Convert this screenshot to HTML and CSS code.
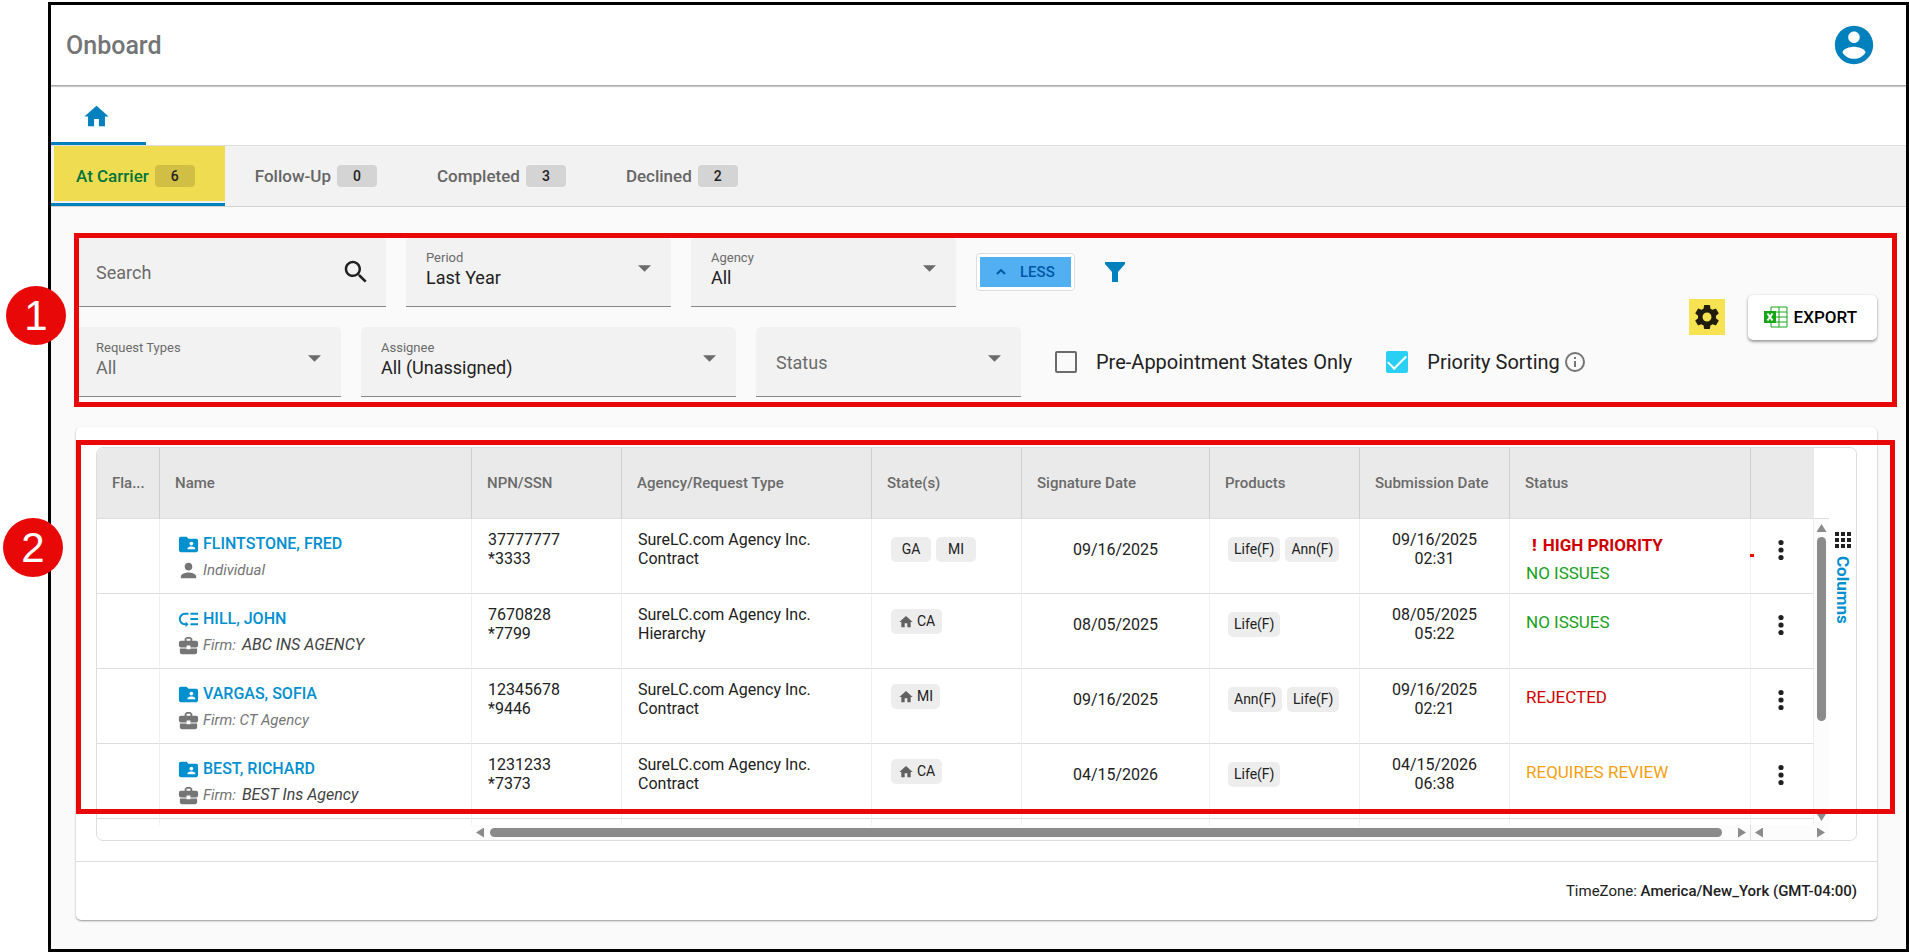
FILE: index.html
```html
<!DOCTYPE html>
<html lang="en">

<head>
    <meta charset="UTF-8" />
    <meta name="viewport" content="width=device-width, initial-scale=1.0" />
    <title>Onboard</title>
    <link rel="stylesheet" href="styles.css">
</head>

<body>
    <!-- Shared icons -->
    <svg class="sprite" aria-hidden="true">
        <symbol id="home" viewBox="0 0 24 24"><path d="M10 20v-6h4v6h5v-8h3L12 3 2 12h3v8z" /></symbol>
        <symbol id="folder" viewBox="0 0 24 24"><path d="M20 6h-8l-2-2H4c-1.100 0-1.990.9-1.990 2L2 18c0 1.100.9 2 2 2h16c1.100 0 2-.9 2-2V8c0-1.100-.9-2-2-2zm-5 3c1.100 0 2 .9 2 2s-.9 2-2 2-2-.9-2-2 .9-2 2-2zm4 8h-8v-1c0-1.330 2.670-2 4-2s4 .67 4 2v1z" /></symbol>
        <symbol id="person" viewBox="0 0 24 24"><path d="M12 12c2.210 0 4-1.790 4-4s-1.790-4-4-4-4 1.790-4 4 1.790 4 4 4zm0 2c-2.670 0-8 1.340-8 4v2h16v-2c0-2.660-5.330-4-8-4z" /></symbol>
        <symbol id="case" viewBox="0 0 24 24"><path d="M10 16v-1H3.010L3 19c0 1.110.89 2 2 2h14c1.110 0 2-.89 2-2v-4h-7v1h-4zm10-9h-4.010V5l-2-2h-4l-2 2v2H4c-1.100 0-2 .9-2 2v3c0 1.110.89 2 2 2h6v-2h4v2h6c1.100 0 2-.9 2-2V9c0-1.100-.9-2-2-2zm-6 0h-4V5h4v2z" /></symbol>
        <symbol id="hierarchy" viewBox="0 0 24 24"><path d="M14 5h8v2h-8zm0 5.500h8v2h-8zm0 5.500h8v2h-8zM2 11.500C2 15.080 4.920 18 8.500 18H9v2l3-3-3-3v2h-.5C6.020 16 4 13.980 4 11.500S6.020 7 8.500 7H12V5H8.500C4.920 5 2 7.920 2 11.500z" /></symbol>
        <symbol id="caret" viewBox="0 0 14 7"><path d="M0 0h14L7 7z" /></symbol>
        <symbol id="more" viewBox="0 0 24 24"><circle cx="12" cy="4.500" r="2.600" /><circle cx="12" cy="12" r="2.600" /><circle cx="12" cy="19.500" r="2.600" /></symbol>
    </svg>

    <div class="frame">
        <header class="header">
            <h1>Onboard</h1>
            <button class="icon-button" aria-label="Account">
                <svg class="avatar" viewBox="0 0 24 24"><path d="M12 2C6.480 2 2 6.480 2 12s4.480 10 10 10 10-4.480 10-10S17.520 2 12 2zm0 3c1.660 0 3 1.340 3 3s-1.340 3-3 3-3-1.340-3-3 1.340-3 3-3zm0 14.200c-2.500 0-4.710-1.280-6-3.220.03-1.990 4-3.080 6-3.080 1.990 0 5.970 1.090 6 3.080-1.290 1.940-3.500 3.220-6 3.220z" /></svg>
            </button>
        </header>

        <nav class="main-nav">
            <a href="#" aria-label="Home"><svg class="home-icon"><use href="#home" /></svg></a>
        </nav>

        <nav class="tabs">
            <a class="tab active" href="#">At Carrier <span class="badge">6</span></a>
            <a class="tab" href="#">Follow-Up <span class="badge">0</span></a>
            <a class="tab" href="#">Completed <span class="badge">3</span></a>
            <a class="tab" href="#">Declined <span class="badge">2</span></a>
        </nav>

        <main class="content">
            <section class="filters">
                <div class="filter-rows">
                    <div class="filter-row">
                        <div class="field search">
                            <input type="text" placeholder="Search" aria-label="Search">
                            <svg class="search-icon" viewBox="0 0 24 24"><path d="M15.500 14h-.79l-.28-.27C15.410 12.590 16 11.110 16 9.500 16 5.910 13.090 3 9.500 3S3 5.910 3 9.500 5.910 16 9.500 16c1.610 0 3.090-.59 4.230-1.570l.27.28v.79l5 4.990L20.490 19l-4.990-5zm-6 0C7.010 14 5 11.990 5 9.500S7.010 5 9.500 5 14 7.010 14 9.500 11.990 14 9.500 14z" /></svg>
                        </div>
                        <div class="field">
                            <div class="field-text">
                                <label for="period">Period</label>
                                <select id="period"><option>Last Year</option></select>
                            </div>
                            <svg class="caret"><use href="#caret" /></svg>
                        </div>
                        <div class="field">
                            <div class="field-text">
                                <label for="agency">Agency</label>
                                <select id="agency"><option>All</option></select>
                            </div>
                            <svg class="caret"><use href="#caret" /></svg>
                        </div>
                        <button class="less"><span><svg viewBox="0 0 10 6"><path d="M1 5l4-4 4 4" /></svg>LESS</span></button>
                        <button class="icon-button funnel" aria-label="Filter">
                            <svg viewBox="0 0 20 20"><path d="M0 0h20v2l-7 8v10H7V10L0 2z" /></svg>
                        </button>
                    </div>
                    <div class="filter-row">
                        <div class="field">
                            <div class="field-text">
                                <label for="types">Request Types</label>
                                <select id="types" class="muted"><option>All</option></select>
                            </div>
                            <svg class="caret"><use href="#caret" /></svg>
                        </div>
                        <div class="field wide">
                            <div class="field-text">
                                <label for="assignee">Assignee</label>
                                <select id="assignee"><option>All (Unassigned)</option></select>
                            </div>
                            <svg class="caret"><use href="#caret" /></svg>
                        </div>
                        <div class="field">
                            <select class="muted" aria-label="Status"><option>Status</option></select>
                            <svg class="caret"><use href="#caret" /></svg>
                        </div>
                        <div class="checks">
                            <label class="check"><input type="checkbox">Pre-Appointment States Only</label>
                            <label class="check"><input type="checkbox" checked>Priority Sorting
                                <svg class="info" viewBox="0 0 20 20"><circle cx="10" cy="10" r="9" /><path d="M10 9v6M10 5v2" /></svg>
                            </label>
                        </div>
                    </div>
                </div>
                <div class="actions">
                    <button class="settings" aria-label="Settings">
                        <svg viewBox="0 0 24 24"><path d="M19.140 12.940c.04-.3.06-.61.06-.94 0-.32-.02-.64-.07-.94l2.030-1.580c.18-.14.23-.41.12-.61l-1.920-3.320c-.12-.22-.37-.29-.59-.22l-2.390.96c-.5-.38-1.030-.7-1.620-.94l-.36-2.540c-.04-.24-.24-.41-.48-.41h-3.840c-.24 0-.43.17-.47.41l-.36 2.540c-.59.24-1.130.57-1.620.94l-2.390-.96c-.22-.08-.47 0-.59.22L2.740 8.870c-.12.21-.08.47.12.61l2.030 1.580c-.05.3-.09.63-.09.94s.02.64.07.94l-2.030 1.580c-.18.14-.23.41-.12.61l1.920 3.320c.12.22.37.29.59.22l2.390-.96c.5.38 1.030.7 1.620.94l.36 2.540c.05.24.24.41.48.41h3.840c.24 0 .44-.17.47-.41l.36-2.540c.59-.24 1.130-.56 1.620-.94l2.390.96c.22.08.47 0 .59-.22l1.920-3.320c.12-.22.07-.47-.12-.61l-2.010-1.580zM12 15.600c-1.980 0-3.600-1.620-3.600-3.600s1.620-3.600 3.600-3.600 3.600 1.620 3.600 3.600-1.620 3.600-3.600 3.600z" /></svg>
                    </button>
                    <button class="export">
                        <svg viewBox="0 0 24 22">
                            <path class="sheet" d="M7 1h16v20H7zM7 6h16M7 11h16M7 16h16M15 1v20" />
                            <path class="tile" d="M0 5h12v12H0z" />
                            <path class="cross" d="M3.500 7.500l5 7M8.500 7.500l-5 7" />
                        </svg>
                        EXPORT
                    </button>
                </div>
                <div class="callout"></div>
                <span class="marker marker-one">1</span>
            </section>

            <section class="card">
                <div class="grid">
                    <div class="grid-main">
                        <div class="grid-body">
                            <table>
                                <colgroup>
                                    <col class="col-flag">
                                    <col class="col-name">
                                    <col class="col-base">
                                    <col class="col-agency">
                                    <col class="col-base">
                                    <col class="col-sign">
                                    <col class="col-base">
                                    <col class="col-base">
                                    <col>
                                    <col class="col-menu">
                                </colgroup>
                                <thead>
                                    <tr>
                                        <th>Fla...</th>
                                        <th>Name</th>
                                        <th>NPN/SSN</th>
                                        <th>Agency/Request Type</th>
                                        <th>State(s)</th>
                                        <th>Signature Date</th>
                                        <th>Products</th>
                                        <th>Submission Date</th>
                                        <th>Status</th>
                                        <th></th>
                                    </tr>
                                </thead>
                                <tbody>
                                    <tr>
                                        <td></td>
                                        <td class="name">
                                            <a href="#"><svg><use href="#folder" /></svg>FLINTSTONE, FRED</a>
                                            <p><svg><use href="#person" /></svg>Individual</p>
                                        </td>
                                        <td>37777777<br>*3333</td>
                                        <td>SureLC.com Agency Inc.<br>Contract</td>
                                        <td class="chips states"><div><span class="chip state">GA</span><span class="chip state">MI</span></div></td>
                                        <td class="signed">09/16/2025</td>
                                        <td class="chips"><div><span class="chip">Life(F)</span><span class="chip">Ann(F)</span></div></td>
                                        <td class="submitted">09/16/2025<br>02:31</td>
                                        <td class="status priority ok"><strong><b>!</b>HIGH PRIORITY</strong>NO ISSUES<i class="tick"></i></td>
                                        <td class="menu"><button class="icon-button" aria-label="Actions"><svg><use href="#more" /></svg></button></td>
                                    </tr>
                                    <tr>
                                        <td></td>
                                        <td class="name">
                                            <a href="#"><svg><use href="#hierarchy" /></svg>HILL, JOHN</a>
                                            <p><svg><use href="#case" /></svg>Firm: <em>ABC INS AGENCY</em></p>
                                        </td>
                                        <td>7670828<br>*7799</td>
                                        <td>SureLC.com Agency Inc.<br>Hierarchy</td>
                                        <td class="chips states resident"><div><span class="chip"><svg><use href="#home" /></svg>CA</span></div></td>
                                        <td class="signed">08/05/2025</td>
                                        <td class="chips"><div><span class="chip">Life(F)</span></div></td>
                                        <td class="submitted">08/05/2025<br>05:22</td>
                                        <td class="status ok">NO ISSUES</td>
                                        <td class="menu"><button class="icon-button" aria-label="Actions"><svg><use href="#more" /></svg></button></td>
                                    </tr>
                                    <tr>
                                        <td></td>
                                        <td class="name">
                                            <a href="#"><svg><use href="#folder" /></svg>VARGAS, SOFIA</a>
                                            <p><svg><use href="#case" /></svg>Firm: CT Agency</p>
                                        </td>
                                        <td>12345678<br>*9446</td>
                                        <td>SureLC.com Agency Inc.<br>Contract</td>
                                        <td class="chips states resident"><div><span class="chip"><svg><use href="#home" /></svg>MI</span></div></td>
                                        <td class="signed">09/16/2025</td>
                                        <td class="chips"><div><span class="chip">Ann(F)</span><span class="chip">Life(F)</span></div></td>
                                        <td class="submitted">09/16/2025<br>02:21</td>
                                        <td class="status rejected">REJECTED</td>
                                        <td class="menu"><button class="icon-button" aria-label="Actions"><svg><use href="#more" /></svg></button></td>
                                    </tr>
                                    <tr>
                                        <td></td>
                                        <td class="name">
                                            <a href="#"><svg><use href="#folder" /></svg>BEST, RICHARD</a>
                                            <p><svg><use href="#case" /></svg>Firm: <em>BEST Ins Agency</em></p>
                                        </td>
                                        <td>1231233<br>*7373</td>
                                        <td>SureLC.com Agency Inc.<br>Contract</td>
                                        <td class="chips states resident"><div><span class="chip"><svg><use href="#home" /></svg>CA</span></div></td>
                                        <td class="signed">04/15/2026</td>
                                        <td class="chips"><div><span class="chip">Life(F)</span></div></td>
                                        <td class="submitted">04/15/2026<br>06:38</td>
                                        <td class="status review">REQUIRES REVIEW</td>
                                        <td class="menu"><button class="icon-button" aria-label="Actions"><svg><use href="#more" /></svg></button></td>
                                    </tr>
                                    <tr class="next-row">
                                        <td></td><td></td><td></td><td></td><td></td><td></td><td></td><td></td><td></td><td></td>
                                    </tr>
                                </tbody>
                            </table>
                            <div class="v-scroll">
                                <div class="v-track">
                                    <i class="arrow up"></i>
                                    <i class="v-thumb"></i>
                                    <i class="arrow down"></i>
                                </div>
                            </div>
                        </div>
                        <div class="h-scroll">
                            <div class="h-track">
                                <i class="arrow left"></i>
                                <i class="h-thumb"></i>
                                <i class="arrow right"></i>
                            </div>
                            <div class="h-track pinned">
                                <i class="arrow left"></i>
                                <i class="arrow right"></i>
                            </div>
                        </div>
                    </div>
                    <button class="side-button">
                        <svg viewBox="0 0 16 16"><path d="M0 0h4v4H0zM6 0h4v4H6zM12 0h4v4h-4zM0 6h4v4H0zM6 6h4v4H6zM12 6h4v4h-4zM0 12h4v4H0zM6 12h4v4H6zM12 12h4v4h-4z" /></svg>
                        <span>Columns</span>
                    </button>
                </div>
                <footer class="card-footer">TimeZone: <b>America/New_York (GMT-04:00)</b></footer>
                <div class="callout"></div>
                <span class="marker marker-two">2</span>
            </section>
        </main>
    </div>
</body>

</html>
```
FILE: styles.css
```css
* {
    box-sizing: border-box;
}

body {
    margin: 0;
    padding: 2px 0 0 48px;
    background-color: #fff;
    font-family: Roboto, "Liberation Sans", sans-serif;
    font-size: 16px;
    color: #212121;
}

button,
input,
select {
    font-family: inherit;
    color: inherit;
}

a {
    text-decoration: none;
}

.sprite {
    display: none;
}

.icon-button {
    display: flex;
    padding: 0;
    border: none;
    background: none;
    cursor: pointer;
}

.frame {
    display: flex;
    flex-direction: column;
    min-height: calc(100vh - 2px);
    border: 3px solid #000;
}

/* Header */
.header {
    display: flex;
    justify-content: space-between;
    align-items: center;
    height: 81px;
    padding: 0 29px 0 15px;
    border-bottom: 1px solid #a9aaa9;
    box-shadow: 0 1px 1px rgba(0, 0, 0, 0.2);
}

h1 {
    margin: 0;
    font-size: 25px;
    font-weight: 500;
    color: #757575;
}

.avatar {
    width: 46px;
    height: 46px;
    fill: #0080bd;
}

.main-nav {
    display: flex;
    height: 60px;
    border-bottom: 1px solid #dedede;
}

.main-nav a {
    display: flex;
    justify-content: center;
    align-items: center;
    width: 95px;
    padding: 4px 5px 0 0;
    border-bottom: 3px solid #0080bd;
}

.home-icon {
    width: 29px;
    height: 29px;
    fill: #0080bd;
}

/* Tabs */
.tabs {
    display: flex;
    height: 61px;
    background-color: #f2f2f2;
    border-bottom: 1px solid #d4d4d4;
}

.tab {
    position: relative;
    z-index: 0;
    display: flex;
    align-items: center;
    gap: 6px;
    padding: 0 30px;
    font-size: 17px;
    font-weight: 500;
    color: #666;
}

.tab.active {
    padding-left: 25px;
    border-bottom: 3px solid #0080bd;
    padding-top: 3px;
    color: #00763d;
}

.tab.active::before {
    content: "";
    position: absolute;
    inset: 0 0 2px 3px;
    background-color: #efdc50;
    z-index: -1;
}

.badge {
    width: 40px;
    border-radius: 4px;
    background-color: #d4d4d4;
    font-size: 14px;
    line-height: 22px;
    text-align: center;
    color: #212121;
}

.active .badge {
    background-color: #d1bf45;
}

.content {
    flex: 1;
    padding: 30px 29px 29px 25px;
    background-color: #fafafa;
}

/* Filters */
.filters {
    position: relative;
    display: flex;
    justify-content: space-between;
    margin-bottom: 30px;
}

.filter-rows {
    display: flex;
    flex-direction: column;
    gap: 20px;
}

.filter-row {
    display: flex;
    gap: 20px;
}

.field {
    display: flex;
    align-items: center;
    width: 265px;
    height: 70px;
    padding: 1px 20px 0;
    background-color: #f2f2f2;
    border-bottom: 1px solid #888;
    border-radius: 5px 5px 0 0;
}

.search {
    width: 310px;
    padding-right: 15px;
}

.wide {
    width: 375px;
}

.field-text {
    flex: 1;
    padding-bottom: 7px;
}

.field label {
    display: block;
    font-size: 13px;
    line-height: 17px;
    color: #6b6b6b;
}

.field select,
.field input {
    width: 100%;
    padding: 0;
    border: none;
    outline: none;
    background: none;
    appearance: none;
    font-size: 18px;
    line-height: 23px;
}

.field input::placeholder {
    color: #6b6b6b;
}

.field .muted {
    color: #6b6b6b;
}

.search-icon {
    flex: none;
    width: 30px;
    height: 30px;
    fill: #212121;
}

.caret {
    flex: none;
    width: 13px;
    height: 7px;
    margin-bottom: 7px;
    fill: #6b6b6b;
}

.less {
    align-self: center;
    padding: 3px;
    border: 1px solid #ddd;
    border-radius: 4px;
    background-color: #fff;
    cursor: pointer;
}

.less span {
    display: flex;
    align-items: center;
    gap: 14px;
    padding: 0 16px;
    background-color: #52aff2;
    font-size: 15px;
    font-weight: 500;
    line-height: 30px;
    color: #0058a8;
}

.less svg {
    width: 10px;
    height: 6px;
    fill: none;
    stroke: #0058a8;
    stroke-width: 2;
}

.funnel {
    align-self: center;
    margin-left: 10px;
}

.funnel svg {
    width: 20px;
    height: 20px;
    fill: #0080bd;
}

.checks {
    display: flex;
    gap: 34px;
    padding-left: 14px;
}

.check {
    display: flex;
    align-items: center;
    font-size: 20px;
}

.check input {
    width: 22px;
    height: 22px;
    margin: 0 19px 0 0;
    border: 2px solid #6b6b6b;
    border-radius: 2px;
    appearance: none;
}

.check input:checked {
    display: grid;
    place-items: center;
    border: none;
    background-color: #29d0f3;
}

.check input:checked::before {
    content: "";
    width: 16px;
    height: 8px;
    border: solid #fff;
    border-width: 0 0 2px 2px;
    transform: translateY(-2px) rotate(-45deg);
}

.info {
    width: 20px;
    height: 20px;
    margin-left: 5px;
    fill: none;
    stroke: #757575;
    stroke-width: 2;
}

.actions {
    display: flex;
    align-items: center;
    gap: 23px;
}

.settings {
    display: flex;
    padding: 3px;
    border: none;
    background-color: #f7e251;
    cursor: pointer;
}

.settings svg {
    width: 30px;
    height: 30px;
    fill: #201d0b;
}

.export {
    display: flex;
    align-items: center;
    gap: 6px;
    height: 45px;
    padding: 0 20px 0 16px;
    border: none;
    border-radius: 5px;
    background-color: #fff;
    box-shadow: 0 2px 3px rgba(0, 0, 0, 0.35), 0 0 2px rgba(0, 0, 0, 0.15);
    font-size: 17px;
    font-weight: 500;
    color: #000;
    cursor: pointer;
}

.export svg {
    width: 24px;
    height: 22px;
}

.sheet {
    fill: #fff;
    stroke: #18a618;
    stroke-width: 1;
}

.tile {
    fill: #18a618;
}

.cross {
    stroke: #fff;
    stroke-width: 2;
}

/* Callouts and their numbers */
.callout {
    position: absolute;
    inset: -4px -20px -10px -2px;
    border: 5px solid #e90808;
    pointer-events: none;
}

.card .callout {
    inset: 13px -18px 106px 0;
}

.marker {
    position: absolute;
    display: flex;
    justify-content: center;
    align-items: center;
    width: 60px;
    height: 59px;
    border-radius: 50%;
    background-color: #e90808;
    font-family: "Liberation Sans", Arial, sans-serif;
    font-size: 42px;
    color: #fff;
}

.marker-one {
    left: -70px;
    top: 49px;
}

.marker-two {
    left: -73px;
    top: 91px;
}

/* Card with the grid */
.card {
    position: relative;
    padding-top: 20px;
    border-radius: 5px;
    background-color: #fff;
    box-shadow: 0 1px 2px rgba(0, 0, 0, 0.4);
}

.grid {
    display: flex;
    margin: 0 20px 20px;
    border: 1px solid #ddd;
    border-radius: 7px;
    overflow: hidden;
}

.grid-main {
    flex: 1;
}

.grid-body {
    display: flex;
}

table {
    flex: 1;
    width: 100%;
    table-layout: fixed;
    border-collapse: separate;
    border-spacing: 0;
}

.col-flag,
.col-menu {
    width: 63px;
}

.col-name {
    width: 312px;
}

.col-base {
    width: 150px;
}

.col-agency {
    width: 250px;
}

.col-sign {
    width: 188px;
}

th {
    height: 71px;
    padding: 0 0 0 15px;
    border-right: 1px solid #d0d0d0;
    border-bottom: 1px solid #ddd;
    background-color: #eaeaea;
    font-size: 15px;
    font-weight: 500;
    text-align: left;
    white-space: nowrap;
    color: #6b6b6b;
}

th:last-child {
    border-right-color: #eaeaea;
}

td {
    height: 75px;
    padding: 11px 0 0 16px;
    border-right: 1px solid #f0f0f0;
    border-bottom: 1px solid #ddd;
    line-height: 19px;
    vertical-align: top;
    white-space: nowrap;
}

.next-row td {
    height: 6px;
    padding: 0;
    border-bottom: none;
}

.name {
    padding: 12px 0 0 17px;
}

.name a,
.name p {
    display: flex;
    align-items: center;
    gap: 3px;
    margin: 0;
    line-height: 26px;
}

.name a {
    font-weight: 500;
    color: #0090d0;
}

.name p {
    font-size: 15px;
    font-style: italic;
    color: #757575;
}

.name em {
    padding-left: 3px;
    font-size: 16px;
    color: #424242;
}

.name svg {
    width: 23px;
    height: 23px;
    fill: #0090d0;
}

.name p svg {
    fill: #757575;
}

.chips {
    padding: 18px 0 0 18px;
}

.states {
    padding-left: 19px;
}

.chips.resident {
    padding-top: 15px;
}

.chips div {
    display: flex;
    gap: 5px;
}

.chip {
    display: flex;
    align-items: center;
    padding: 0 6px;
    border-radius: 5px;
    background-color: #ededed;
    font-size: 14px;
    line-height: 25px;
}

.chip.state {
    width: 40px;
    padding: 0;
    justify-content: center;
}

.resident .chip {
    padding: 0 7px;
}

.chip svg {
    width: 16px;
    height: 16px;
    margin-right: 3px;
    fill: #616161;
}

.signed {
    padding: 21px 0 0;
    text-align: center;
}

.submitted {
    padding-left: 0;
    text-align: center;
}

.status {
    padding-top: 18px;
    font-size: 17px;
    line-height: 20px;
}

.ok {
    color: #18a020;
}

.rejected {
    color: #d00000;
}

.review {
    color: #f5a010;
}

.priority {
    position: relative;
    padding-top: 12px;
    line-height: 28px;
}

.priority strong {
    display: flex;
    gap: 6px;
    padding-left: 6px;
    color: #d00000;
}

.tick {
    position: absolute;
    right: -4px;
    top: 35px;
    width: 4px;
    height: 3px;
    background-color: #e90808;
}

.menu {
    padding: 19px 0 0 18px;
}

.menu svg {
    width: 24px;
    height: 24px;
    fill: #212121;
}

/* Scroll bars */
.v-scroll {
    display: flex;
    flex-direction: column;
    width: 15px;
    padding-top: 70px;
}

.v-track {
    flex: 1;
    display: flex;
    flex-direction: column;
    align-items: center;
    padding: 5px 0 4px;
    border-top: 1px solid #ddd;
    background-color: #fcfcfc;
}

.v-thumb {
    width: 9px;
    height: 184px;
    margin: 5px 0 auto;
    border-radius: 5px;
    background-color: #8b8b8b;
}

.arrow {
    flex: none;
    width: 8px;
    height: 10px;
    background-color: #8b8b8b;
}

.up,
.down {
    width: 10px;
    height: 8px;
}

.up {
    clip-path: polygon(50% 0, 100% 100%, 0 100%);
}

.down {
    clip-path: polygon(0 0, 100% 0, 50% 100%);
}

.left {
    clip-path: polygon(0 50%, 100% 0, 100% 100%);
}

.right {
    clip-path: polygon(0 0, 100% 50%, 0 100%);
}

.h-scroll {
    display: flex;
    height: 15px;
    padding-left: 375px;
}

.h-track {
    flex: 1;
    display: flex;
    justify-content: space-between;
    align-items: center;
    padding: 0 4px;
    border-right: 1px solid #ddd;
    background-color: #fcfcfc;
}

.h-thumb {
    flex: 1;
    height: 9px;
    margin: 0 16px 0 6px;
    border-radius: 5px;
    background-color: #8b8b8b;
}

.h-track.pinned {
    flex: none;
    width: 78px;
    border: none;
}

.side-button {
    display: flex;
    flex-direction: column;
    align-items: center;
    gap: 8px;
    width: 27px;
    padding: 84px 0 0;
    border: none;
    background: none;
    font-size: 17px;
    font-weight: 700;
    color: #0090d0;
    cursor: pointer;
}

.side-button svg {
    width: 16px;
    height: 16px;
    fill: #212121;
}

.side-button span {
    writing-mode: vertical-rl;
}

.card-footer {
    padding: 0 20px;
    border-top: 1px solid #ddd;
    font-size: 15px;
    line-height: 58px;
    text-align: right;
}

.card-footer b {
    font-weight: 500;
}
```
